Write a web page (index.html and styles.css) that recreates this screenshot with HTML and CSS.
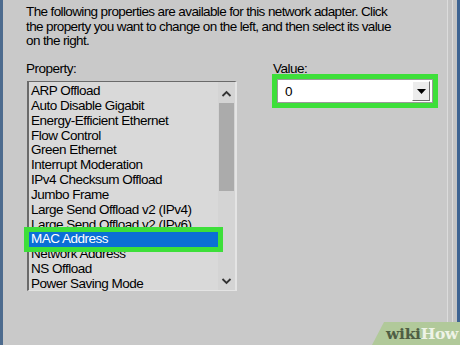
FILE: index.html
```html
<!DOCTYPE html>
<html lang="en">
<head>
  <meta charset="UTF-8">
  <meta name="viewport" content="width=device-width, initial-scale=1.0">
  <title>Advanced properties</title>
  <link rel="stylesheet" href="styles.css">
</head>
<body>

  <div class="window">
    <div class="frame-left"></div>

    <!-- Conteúdo da aba Avançado -->
    <div class="panel">
      <p class="intro">The following properties are available for this network adapter. Click the property you want to change on the left, and then select its value on the right.</p>

      <div class="fields">
        <div class="property-col">
          <label class="field-label">Property:</label>
          <div class="listbox">
            <ul class="list">
              <li>ARP Offload</li>
              <li>Auto Disable Gigabit</li>
              <li>Energy-Efficient Ethernet</li>
              <li>Flow Control</li>
              <li>Green Ethernet</li>
              <li>Interrupt Moderation</li>
              <li>IPv4 Checksum Offload</li>
              <li>Jumbo Frame</li>
              <li>Large Send Offload v2 (IPv4)</li>
              <li>Large Send Offload v2 (IPv6)</li>
              <li class="selected">MAC Address</li>
              <li>Network Address</li>
              <li>NS Offload</li>
              <li>Power Saving Mode</li>
            </ul>
            <div class="scrollbar">
              <svg class="arrow" width="17" height="14" viewBox="0 0 17 14"><polyline points="4.5,9 8.5,5 12.5,9" fill="none" stroke="#333" stroke-width="1.8"/></svg>
              <div class="thumb"></div>
              <div class="track"></div>
              <svg class="arrow" width="17" height="14" viewBox="0 0 17 14"><polyline points="4.5,5 8.5,9 12.5,5" fill="none" stroke="#333" stroke-width="1.8"/></svg>
            </div>
          </div>
        </div>

        <div class="value-col">
          <label class="field-label">Value:</label>
          <div class="combo">
            <span class="combo-text">0</span>
            <span class="combo-button">
              <svg width="9" height="5" viewBox="0 0 9 5"><polygon points="0,0 9,0 4.5,5" fill="#000"/></svg>
            </span>
          </div>
        </div>
      </div>
    </div>

    <div class="frame-right"></div>
  </div>

  <div class="watermark"><span class="wiki">wiki</span><span class="how">How</span></div>

</body>
</html>
```

FILE: styles.css
```css
* {
  margin: 0;
  padding: 0;
  box-sizing: border-box;
}

body {
  width: 460px;
  height: 345px;
  overflow: hidden;
  position: relative;
  background-color: #c9c9c9;
  font-family: "Liberation Sans", Arial, sans-serif;
  font-size: 13.5px;
  letter-spacing: -0.5px;
  color: #000;
}

.window {
  display: flex;
  height: 100%;
}

.frame-left {
  width: 3px;
  background-color: #4d6b8e;
}

.panel {
  flex: 1;
  padding: 5px 0 0 23px;
}

.intro {
  width: 372px;
  line-height: 14.5px;
  letter-spacing: -0.62px;
}

.fields {
  display: flex;
  margin-top: 13px;
}

.property-col {
  width: 211px;
}

.value-col {
  margin-left: 36px;
}

.field-label {
  display: block;
  line-height: 14.5px;
}

/* Lista de propriedades */
.listbox {
  display: flex;
  margin: 5px 0 0 1px;
  width: 210px;
  height: 210px;
  background-color: #d9d9d9;
  border-top: 1px solid #6a6a6a;
  border-left: 2px solid #6a6a6a;
  border-right: 2px solid #e4e4e4;
  border-bottom: 1px solid #e4e4e4;
}

.list {
  flex: 1;
  list-style: none;
  padding-top: 2px;
}

.list li {
  height: 14.85px;
  line-height: 14.85px;
  padding-left: 2px;
  white-space: nowrap;
}

.list .selected {
  position: relative;
  z-index: 1;
  background-color: #0b6fd6;
  color: #fff;
  outline: 5px solid #3ddf3a;
}

.scrollbar {
  width: 17px;
  display: flex;
  flex-direction: column;
  background-color: #d4d4d4;
}

.arrow {
  display: block;
  margin-top: 5px;
}

.scrollbar .arrow:last-child {
  margin: 0 0 2px;
}

.thumb {
  height: 88px;
  margin: 2px 1px 0;
  background-color: #ababab;
}

.track {
  flex: 1;
}

/* Caixa de valor */
.combo {
  display: flex;
  align-items: center;
  justify-content: space-between;
  width: 156px;
  height: 24px;
  margin: 3px 0 0 4px;
  padding: 0 2px 0 7px;
  background-color: #fff;
  border: 1px solid #9a9a9a;
  outline: 5px solid #3ddf3a;
}

.combo-button {
  display: flex;
  align-items: center;
  justify-content: center;
  width: 18px;
  height: 20px;
  background-color: #ececec;
  border-right: 1px solid #707070;
  border-bottom: 1px solid #707070;
  border-top: 1px solid #fff;
  border-left: 1px solid #fff;
}

.frame-right {
  width: 13px;
  background: linear-gradient(to right,
    #dcdcdc 0, #dcdcdc 1px,
    #c4c4c4 1px, #c4c4c4 5px,
    #dcdcdc 5px, #dcdcdc 6px,
    #c4c4c4 6px, #c4c4c4 10px,
    #3e6492 10px);
}

/* Marca d'água */
.watermark {
  position: absolute;
  right: 0;
  bottom: 0;
  width: 88px;
  height: 23px;
  padding: 2px 0 0 14px;
  background-color: #b1c99a;
  clip-path: polygon(12px 0, 100% 0, 100% 100%, 0 100%);
  font-family: "DejaVu Serif", Georgia, serif;
  font-weight: bold;
  font-size: 15.5px;
  letter-spacing: -0.3px;
  line-height: 20px;
}

.wiki {
  color: #4f5e44;
}

.how {
  color: #eef3e6;
}
```
